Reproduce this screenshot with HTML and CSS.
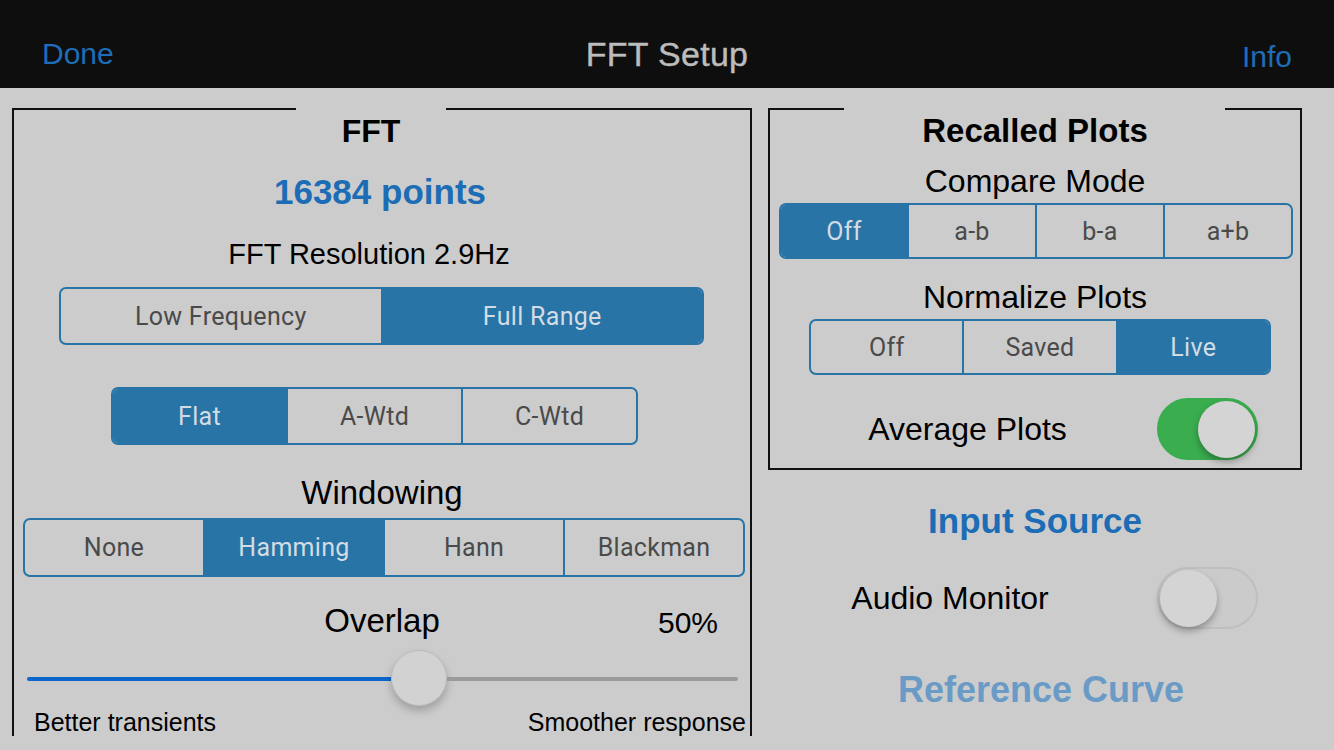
FILE: index.html
```html
<!DOCTYPE html>
<html lang="en">
<head>
<meta charset="UTF-8" />
<meta name="viewport" content="width=device-width, initial-scale=1" />
<title>FFT Setup</title>
<link rel="stylesheet" href="styles.css">
</head>
<body>

<header class="navbar">
  <a class="nav-btn">Done</a>
  <h1>FFT Setup</h1>
  <a class="nav-btn nav-info">Info</a>
</header>

<main class="content">
  <section class="panel panel-fft">
    <div class="frame-top"><span></span><span class="gap"></span><span></span></div>
    <h2 class="panel-title">FFT</h2>
    <div class="points">16384 points</div>
    <div class="label resolution">FFT Resolution 2.9Hz</div>

    <div class="segmented seg-range">
      <span>Low Frequency</span>
      <span class="active">Full Range</span>
    </div>

    <div class="segmented seg-weight">
      <span class="active">Flat</span>
      <span>A-Wtd</span>
      <span>C-Wtd</span>
    </div>

    <div class="label windowing">Windowing</div>
    <div class="segmented seg-window">
      <span>None</span>
      <span class="active">Hamming</span>
      <span>Hann</span>
      <span>Blackman</span>
    </div>

    <div class="overlap-row">
      <span class="overlap-title">Overlap</span>
      <span class="overlap-value">50%</span>
    </div>
    <div class="slider">
      <div class="track-fill"></div>
      <div class="thumb"></div>
      <div class="track-rest"></div>
    </div>
    <div class="slider-labels">
      <span>Better transients</span>
      <span>Smoother response</span>
    </div>
  </section>

  <div class="side">
    <section class="panel panel-recall">
      <div class="frame-top"><span></span><span class="gap"></span><span></span></div>
      <h2 class="panel-title">Recalled Plots</h2>
      <div class="label compare">Compare Mode</div>
      <div class="segmented seg-compare">
        <span class="active">Off</span>
        <span>a-b</span>
        <span>b-a</span>
        <span>a+b</span>
      </div>
      <div class="label normalize">Normalize Plots</div>
      <div class="segmented seg-normalize">
        <span>Off</span>
        <span>Saved</span>
        <span class="active">Live</span>
      </div>
      <div class="switch-row row-average">
        <span class="switch-label">Average Plots</span>
        <div class="switch on"><div class="knob"></div></div>
      </div>
    </section>

    <h3 class="section-title">Input Source</h3>
    <div class="switch-row row-audio">
      <span class="switch-label">Audio Monitor</span>
      <div class="switch"><div class="knob"></div></div>
    </div>
    <h3 class="section-title muted">Reference Curve</h3>
  </div>
</main>

</body>
</html>
```

FILE: styles.css
```css
body {
  margin: 0;
  background-color: #cccccc;
  font-family: "Liberation Sans", Arial, sans-serif;
  color: #000;
  height: 750px;
  overflow: hidden;
}

/* top bar */
.navbar {
  height: 88px;
  box-sizing: border-box;
  background-color: #0e0e0e;
  display: flex;
  align-items: center;
  justify-content: space-between;
  padding: 20px 42px 0 42px;
}

.navbar h1 {
  margin: 0;
  font-size: 34px;
  font-weight: normal;
  color: #bcbcbc;
  letter-spacing: 0.3px;
  -webkit-text-stroke: 0.4px #bcbcbc;
}

.nav-btn {
  font-size: 30px;
  color: #1d6db8;
  width: 120px;
}

.nav-info {
  text-align: right;
  padding-top: 6px;
}

/* content area */
.content {
  height: 648px;
  overflow: hidden;
  display: flex;
  align-items: flex-start;
  gap: 16px;
  padding: 20px 0 0 12px;
  box-sizing: border-box;
}

.panel {
  border: 2px solid #111;
  border-top: none;
  box-sizing: border-box;
  text-align: center;
}

.frame-top {
  display: grid;
  height: 2px;
  margin: 0 -2px;
}

.frame-top span {
  border-top: 2px solid #111;
}

.frame-top .gap {
  border-top: none;
}

.panel-fft {
  width: 740px;
  padding-bottom: 40px;
}

.panel-fft .frame-top {
  grid-template-columns: 284px 150px 1fr;
}

.panel-recall {
  width: 534px;
  padding-bottom: 8px;
}

.panel-recall .frame-top {
  grid-template-columns: 76px 381px 1fr;
}

.panel-title {
  margin: 3px 0 0 0;
  font-size: 32px;
  line-height: 36px;
  font-weight: bold;
}

.panel-fft .panel-title {
  padding-right: 22px;
}

.panel-recall .panel-title {
  font-size: 33px;
}

.points {
  margin-top: 23px;
  font-size: 35px;
  line-height: 40px;
  font-weight: bold;
  color: #1c6db5;
  padding-right: 4px;
}

.label {
  font-size: 32px;
  line-height: 36px;
}

.resolution {
  margin-top: 25px;
  font-size: 29px;
  line-height: 34px;
  padding-right: 26px;
}

.windowing {
  margin-top: 30px;
  font-size: 33px;
}

/* segmented controls */
.segmented {
  display: flex;
  border: 2px solid #2874a6;
  border-radius: 7px;
  overflow: hidden;
  box-sizing: border-box;
  font-family: Roboto, "Liberation Sans", sans-serif;
  font-size: 25px;
  letter-spacing: 0.3px;
  color: #4a4a4a;
}

.segmented span {
  flex: 1;
  display: flex;
  align-items: center;
  justify-content: center;
  border-left: 2px solid #2874a6;
}

.segmented span:first-child {
  border-left: none;
}

.segmented .active {
  background-color: #2874a6;
  color: #d3dbe3;
}

.seg-range {
  margin: 16px 46px 0 45px;
  height: 58px;
}

.seg-weight {
  margin: 42px 112px 0 97px;
  height: 58px;
}

.seg-window {
  margin: 7px 5px 0 9px;
  height: 59px;
}

.seg-compare {
  margin: 4px 7px 0 9px;
  height: 56px;
}

.seg-normalize {
  margin: 4px 29px 0 39px;
  height: 56px;
}

.compare {
  margin-top: 14px;
}

.normalize {
  margin-top: 20px;
}

/* overlap slider */
.overlap-row {
  margin-top: 25px;
  height: 38px;
  display: grid;
  grid-template-columns: 1fr auto 1fr;
  align-items: center;
  line-height: 38px;
}

.overlap-title {
  grid-column: 2;
  font-size: 33px;
}

.overlap-value {
  grid-column: 3;
  justify-self: end;
  margin-right: 32px;
  font-size: 30px;
  position: relative;
  top: 2px;
}

.slider {
  margin: 9px 12px 0 13px;
  height: 57px;
  display: flex;
  align-items: center;
}

.track-fill {
  width: 364px;
  height: 4px;
  background-color: #0b64cc;
  border-radius: 2px 0 0 2px;
  margin-top: 3px;
}

.track-rest {
  flex: 1;
  height: 4px;
  background-color: #9a9a9a;
  border-radius: 0 2px 2px 0;
  margin-top: 3px;
}

.thumb {
  width: 56px;
  height: 56px;
  border-radius: 50%;
  background-color: #d2d2d2;
  border: 1px solid #bdbdbd;
  box-sizing: border-box;
  box-shadow: 0 5px 8px rgba(0, 0, 0, 0.22);
}

.slider-labels {
  margin: 4px 4px 0 20px;
  display: flex;
  justify-content: space-between;
  line-height: 24px;
  font-size: 25px;
}

/* right column */
.side {
  width: 534px;
}

.section-title {
  margin: 31px 0 0 0;
  text-align: center;
  font-size: 35px;
  line-height: 40px;
  font-weight: bold;
  color: #1c6db5;
}

.section-title.muted {
  margin-top: 41px;
  padding-left: 12px;
  font-size: 36px;
  color: #6a9bc6;
}

.switch-row {
  display: flex;
  align-items: center;
}

.switch-label {
  flex: 1;
  text-align: center;
  font-size: 32px;
}

.row-average {
  margin-top: 23px;
  padding-right: 42px;
}

.row-average .switch-label {
  padding-left: 8px;
}

.row-audio {
  margin-top: 26px;
  padding-right: 44px;
}

.row-audio .switch-label {
  padding-right: 25px;
}

.switch {
  width: 101px;
  height: 62px;
  border-radius: 31px;
  box-sizing: border-box;
  border: 2px solid #bfbfbf;
  background-color: #cbcbcb;
  display: flex;
  align-items: center;
  justify-content: flex-start;
  padding: 0 1px;
}

.switch.on {
  border-color: #3aad4f;
  background-color: #3aad4f;
  justify-content: flex-end;
}

.knob {
  width: 57px;
  height: 57px;
  border-radius: 50%;
  background-color: #d4d4d4;
  box-shadow: 0 4px 7px rgba(0, 0, 0, 0.3);
}
```
